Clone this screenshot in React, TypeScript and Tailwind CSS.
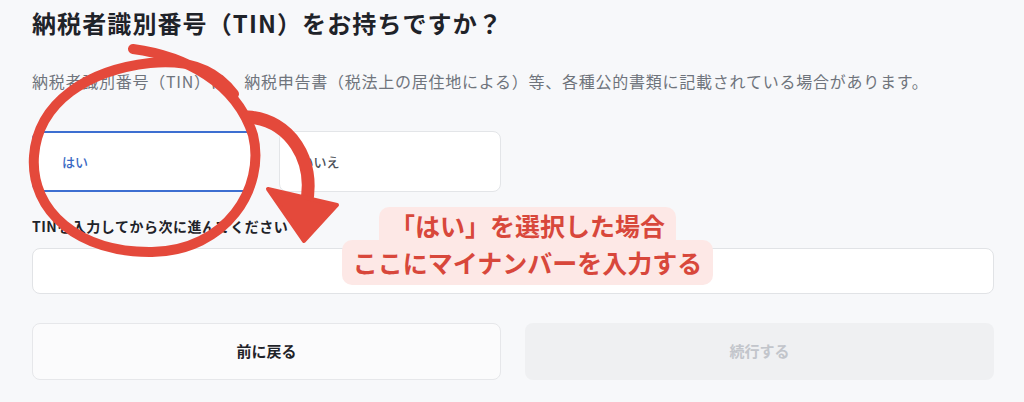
import React from 'react';

const Annotation: React.FC = () => (
  <svg
    className="absolute inset-0 pointer-events-none"
    width={1024}
    height={402}
    viewBox="0 0 1024 402"
  >
    {/* hand-drawn circle round はい */}
    <path
      d="M 133 49 C 185 56, 236 82, 253 135 C 266 188, 226 251, 152 252 C 80 253, 30 212, 34 156 C 38 102, 88 70, 150 63 C 190 59, 216 70, 234 94"
      fill="none"
      stroke="#e4493b"
      strokeWidth={10}
      strokeLinecap="round"
    />
    {/* arrow towards the input */}
    <path
      d="M 248 117 C 290 120, 316 160, 306 205"
      fill="none"
      stroke="#e4493b"
      strokeWidth={13}
      strokeLinecap="round"
    />
    <path d="M 268 189 L 337 205 L 304 241 Z" fill="#e4493b" stroke="#e4493b" strokeWidth={4} strokeLinejoin="round" />
  </svg>
);

const Callout: React.FC = () => (
  <div className="absolute left-[342px] top-[207px] w-[371px] flex flex-col items-center font-bold text-[25px] text-[#d8473b] font-['Noto_Sans_CJK_JP',sans-serif]">
    <span className="block bg-[#fde8e6] rounded-t-[10px] px-[11px] h-[33px] leading-[36px]">「はい」を選択した場合</span>
    <span className="block bg-[#fde8e6] rounded-[10px] px-[10px] h-[45px] leading-[44px] w-full text-center">ここにマイナンバーを入力する</span>
  </div>
);

export default function App() {
  return (
    <div className="relative w-[1024px] h-[402px] bg-[#f7f8fa] overflow-hidden font-['Noto_Sans_CJK_JP',sans-serif]">
      <div className="pl-[32px] pr-[30px] pt-[5px]">
        <h1 className="text-[24px] font-bold leading-[36px] tracking-[1.1px] text-[#1f2329]">
          納税者識別番号（TIN）をお持ちですか？
        </h1>
        <p className="mt-[28px] text-[16px] leading-[24px] tracking-[0.75px] text-[#6f747c]">
          納税者識別番号（TIN）は、納税申告書（税法上の居住地による）等、各種公的書類に記載されている場合があります。
        </p>

        <div className="mt-[38px] grid grid-cols-4 gap-6">
          <button className="h-[61px] rounded-[8px] border-2 border-[#3d6fd1] bg-white text-left pl-[28px] text-[13px] font-medium text-[#3b69c4]">
            はい
          </button>
          <button className="h-[61px] rounded-[8px] border border-[#e3e5e8] bg-white text-left pl-[21px] text-[13px] font-medium text-[#4b5058]">
            いいえ
          </button>
        </div>

        <p className="mt-[24px] text-[14px] font-semibold leading-[20px] tracking-[0.5px] text-[#1f2329]">
          TINを入力してから次に進んでください
        </p>
        <input
          className="mt-[12px] block w-full h-[46px] rounded-[8px] border border-[#e1e3e6] bg-white outline-none"
          type="text"
        />

        <div className="mt-[29px] grid grid-cols-2 gap-6">
          <button className="h-[57px] rounded-[8px] border border-[#e6e7ea] bg-[#fbfbfc] text-[15px] font-bold text-[#1f2329]">
            前に戻る
          </button>
          <button className="h-[57px] rounded-[8px] bg-[#eff0f2] text-[15px] font-bold text-[#c2c5cb]">
            続行する
          </button>
        </div>
      </div>

      <Annotation />
      <Callout />
    </div>
  );
}
